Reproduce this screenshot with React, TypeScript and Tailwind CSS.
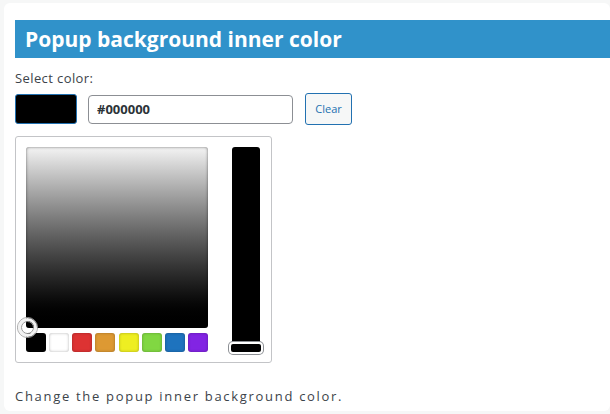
export default function App() {
  const swatches = ["#000000", "#ffffff", "#dd3333", "#dd9933", "#eeee22", "#81d742", "#1e73be", "#8224e3"];

  return (
    <div className="w-[610px] h-[414px] overflow-hidden bg-[#f6f7f7] pt-[3px] pl-[4px]" style={{ fontFamily: '"Open Sans", "Noto Sans", sans-serif' }}>
      <div className="h-[408px] bg-white rounded-[6px] pl-[11px] pt-[17px] text-[#3c434a]">
        {/* header */}
        <div className="h-[38px] bg-[#3092ca] flex items-center pl-[10px]">
          <h2 className="text-white font-bold text-[21px] leading-none">Popup background inner color</h2>
        </div>

        <p className="mt-[11px] text-[13px] tracking-[0.4px] leading-[18px]">Select color:</p>

        {/* color row */}
        <div className="mt-[6px] flex items-center">
          <button type="button" className="w-[62px] h-[30px] bg-black border border-[#2271b1] rounded-[3px]" />
          <input
            type="text"
            value="#000000"
            readOnly
            className="ml-[11px] w-[205px] h-[29px] border border-[#8c8f94] rounded-[4px] px-[8px] text-[13px] font-bold text-[#2c3338] outline-none"
          />
          <button
            type="button"
            className="ml-[12px] w-[47px] h-[32px] border border-[#2271b1] rounded-[3px] bg-[#f6f7f7] text-[#2271b1] text-[11px]"
          >
            Clear
          </button>
        </div>

        {/* picker */}
        <div className="mt-[11px] w-[257px] h-[227px] border border-[#c3c4c7] rounded-[3px] p-[10px] flex gap-[24px] bg-white">
          <div className="flex flex-col">
            <div className="relative w-[182px] h-[181px] rounded-[3px] bg-gradient-to-b from-[#f4f4f4] to-black shadow-[inset_0_0_3px_rgba(0,0,0,0.55)]">
              <div className="absolute left-[-9px] bottom-[-10px] w-[21px] h-[21px] rounded-full border border-[#a0a0a0] flex items-center justify-center">
                <div className="w-[19px] h-[19px] rounded-full border-[3px] border-[#f2f2f2] flex items-center justify-center">
                  <div className="w-[13px] h-[13px] rounded-full border border-[#9a9a9a]" />
                </div>
              </div>
            </div>
            <div className="mt-[5px] w-[182px] flex justify-between">
              {swatches.map((c) => (
                <div
                  key={c}
                  className="w-[20px] h-[19px] rounded-[3px] shadow-[inset_0_0_3px_rgba(0,0,0,0.3)]"
                  style={{ backgroundColor: c }}
                />
              ))}
            </div>
          </div>

          <div className="relative w-[28px] h-[205px] bg-black rounded-[3px]">
            <div className="absolute left-[-3px] bottom-[-2px] w-[34px] h-[12px] rounded-[4px] border-2 border-white bg-black shadow-[0_0_0_1px_#8c8f94]" />
          </div>
        </div>

        <p className="mt-[24px] text-[13px] tracking-[1.7px] leading-[18px]">Change the popup inner background color.</p>
      </div>
    </div>
  );
}
